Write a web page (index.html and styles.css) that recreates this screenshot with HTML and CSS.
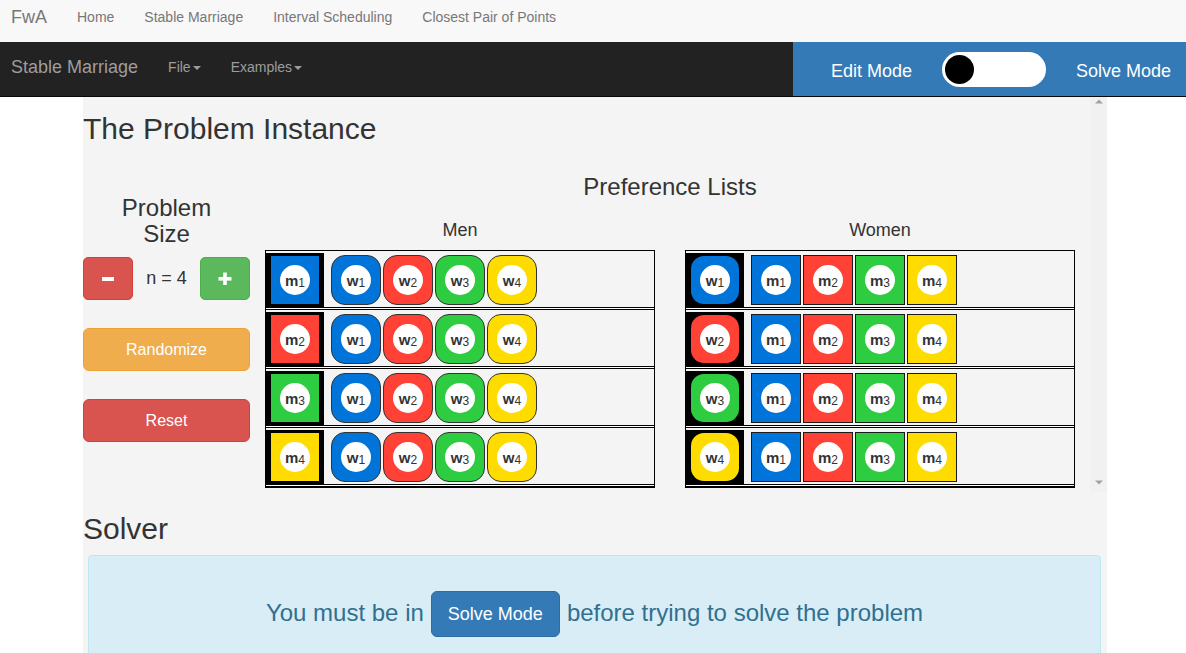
FILE: index.html
```html
<!DOCTYPE html>
<html lang="en">
<head>
<meta charset="utf-8">
<title>Stable Marriage</title>
<link rel="stylesheet" href="styles.css">
</head>
<body>
<nav class="topnav">
  <a class="brand">FwA</a>
  <a class="toplink">Home</a>
  <a class="toplink">Stable Marriage</a>
  <a class="toplink">Interval Scheduling</a>
  <a class="toplink">Closest Pair of Points</a>
</nav>
<nav class="appnav">
  <div class="appnav-left">
    <span class="app-brand">Stable Marriage</span>
    <span class="menu">File<span class="caret"></span></span>
    <span class="menu">Examples<span class="caret"></span></span>
  </div>
  <div class="mode">
    <span class="mode-label">Edit Mode</span>
    <span class="toggle"><span class="knob"></span></span>
    <span class="mode-label">Solve Mode</span>
  </div>
</nav>
<main class="page">
  <div class="scroller">
    <div class="scroll-content">
      <h2 class="title">The Problem Instance</h2>
      <div class="instance">
        <div class="size-col">
          <h3 class="size-title">Problem<br>Size</h3>
          <div class="size-ctrl">
            <button class="btn btn-sq btn-danger"><svg width="14" height="14" viewBox="0 0 14 14"><rect x="1" y="5" width="12" height="4" fill="#fff"/></svg></button>
            <span class="n-label">n = 4</span>
            <button class="btn btn-sq btn-success"><svg width="14" height="14" viewBox="0 0 14 14"><rect x="0.5" y="5" width="13" height="3.6" fill="#fff"/><rect x="5.2" y="0.5" width="3.6" height="12.5" fill="#fff"/></svg></button>
          </div>
          <button class="btn btn-wide btn-warning">Randomize</button>
          <button class="btn btn-wide btn-danger reset">Reset</button>
        </div>
        <div class="prefs">
          <h3 class="prefs-title">Preference Lists</h3>
          <div class="lists">
            <div class="list">
              <div class="list-label">Men</div>
              <div class="ptable">
                <div class="prow">
                  <div class="who"><div class="tile c1"><span class="dot">m<sub>1</sub></span></div></div>
                  <div class="plist">
                    <div class="pref round c1"><span class="dot">w<sub>1</sub></span></div>
                    <div class="pref round c2"><span class="dot">w<sub>2</sub></span></div>
                    <div class="pref round c3"><span class="dot">w<sub>3</sub></span></div>
                    <div class="pref round c4"><span class="dot">w<sub>4</sub></span></div>
                  </div>
                </div>
                <div class="prow">
                  <div class="who"><div class="tile c2"><span class="dot">m<sub>2</sub></span></div></div>
                  <div class="plist">
                    <div class="pref round c1"><span class="dot">w<sub>1</sub></span></div>
                    <div class="pref round c2"><span class="dot">w<sub>2</sub></span></div>
                    <div class="pref round c3"><span class="dot">w<sub>3</sub></span></div>
                    <div class="pref round c4"><span class="dot">w<sub>4</sub></span></div>
                  </div>
                </div>
                <div class="prow">
                  <div class="who"><div class="tile c3"><span class="dot">m<sub>3</sub></span></div></div>
                  <div class="plist">
                    <div class="pref round c1"><span class="dot">w<sub>1</sub></span></div>
                    <div class="pref round c2"><span class="dot">w<sub>2</sub></span></div>
                    <div class="pref round c3"><span class="dot">w<sub>3</sub></span></div>
                    <div class="pref round c4"><span class="dot">w<sub>4</sub></span></div>
                  </div>
                </div>
                <div class="prow">
                  <div class="who"><div class="tile c4"><span class="dot">m<sub>4</sub></span></div></div>
                  <div class="plist">
                    <div class="pref round c1"><span class="dot">w<sub>1</sub></span></div>
                    <div class="pref round c2"><span class="dot">w<sub>2</sub></span></div>
                    <div class="pref round c3"><span class="dot">w<sub>3</sub></span></div>
                    <div class="pref round c4"><span class="dot">w<sub>4</sub></span></div>
                  </div>
                </div>
              </div>
            </div>
            <div class="list">
              <div class="list-label">Women</div>
              <div class="ptable">
                <div class="prow">
                  <div class="who"><div class="tile rtile c1"><span class="dot">w<sub>1</sub></span></div></div>
                  <div class="plist">
                    <div class="pref c1"><span class="dot">m<sub>1</sub></span></div>
                    <div class="pref c2"><span class="dot">m<sub>2</sub></span></div>
                    <div class="pref c3"><span class="dot">m<sub>3</sub></span></div>
                    <div class="pref c4"><span class="dot">m<sub>4</sub></span></div>
                  </div>
                </div>
                <div class="prow">
                  <div class="who"><div class="tile rtile c2"><span class="dot">w<sub>2</sub></span></div></div>
                  <div class="plist">
                    <div class="pref c1"><span class="dot">m<sub>1</sub></span></div>
                    <div class="pref c2"><span class="dot">m<sub>2</sub></span></div>
                    <div class="pref c3"><span class="dot">m<sub>3</sub></span></div>
                    <div class="pref c4"><span class="dot">m<sub>4</sub></span></div>
                  </div>
                </div>
                <div class="prow">
                  <div class="who"><div class="tile rtile c3"><span class="dot">w<sub>3</sub></span></div></div>
                  <div class="plist">
                    <div class="pref c1"><span class="dot">m<sub>1</sub></span></div>
                    <div class="pref c2"><span class="dot">m<sub>2</sub></span></div>
                    <div class="pref c3"><span class="dot">m<sub>3</sub></span></div>
                    <div class="pref c4"><span class="dot">m<sub>4</sub></span></div>
                  </div>
                </div>
                <div class="prow">
                  <div class="who"><div class="tile rtile c4"><span class="dot">w<sub>4</sub></span></div></div>
                  <div class="plist">
                    <div class="pref c1"><span class="dot">m<sub>1</sub></span></div>
                    <div class="pref c2"><span class="dot">m<sub>2</sub></span></div>
                    <div class="pref c3"><span class="dot">m<sub>3</sub></span></div>
                    <div class="pref c4"><span class="dot">m<sub>4</sub></span></div>
                  </div>
                </div>
              </div>
            </div>
          </div>
        </div>
      </div>
    </div>
    <div class="scrollbar">
      <svg class="arrow" width="8" height="5" viewBox="0 0 8 5"><polygon points="0,4.5 8,4.5 4,0.5" fill="#a3a3a3"/></svg>
      <svg class="arrow" width="8" height="5" viewBox="0 0 8 5"><polygon points="0,0.5 8,0.5 4,4.5" fill="#a3a3a3"/></svg>
    </div>
  </div>
  <h2 class="title solver">Solver</h2>
  <div class="alert">
    <span class="alert-text">You must be in</span>
    <button class="btn btn-primary">Solve Mode</button>
    <span class="alert-text">before trying to solve the problem</span>
  </div>
</main>
</body>
</html>
```

FILE: styles.css
```css
html, body {
  margin: 0;
  padding: 0;
  height: 653px;
  overflow: hidden;
  background: #fff;
  font-family: "Liberation Sans", Arial, sans-serif;
  color: #333;
}

.topnav {
  display: flex;
  height: 42px;
  box-sizing: border-box;
  padding-top: 7px;
  background: #f8f8f8;
  line-height: 20px;
}
.brand {
  font-size: 18px;
  color: #777;
  padding: 0 15px 0 11px;
}
.toplink {
  font-size: 14px;
  color: #777;
  padding: 0 15px;
}

.appnav {
  display: flex;
  height: 55px;
  box-sizing: border-box;
  background: #222;
  border-bottom: 1px solid #080808;
}
.appnav-left {
  display: flex;
  align-items: flex-start;
  padding-top: 15px;
  line-height: 20px;
}
.app-brand {
  font-size: 18px;
  color: #9d9d9d;
  padding: 0 15px 0 11px;
}
.menu {
  font-size: 14px;
  color: #9d9d9d;
  padding: 0 15px;
}
.caret {
  display: inline-block;
  width: 0;
  height: 0;
  margin-left: 2px;
  vertical-align: middle;
  border-top: 4px solid #9d9d9d;
  border-left: 4px solid transparent;
  border-right: 4px solid transparent;
}

.mode {
  margin-left: auto;
  width: 393px;
  box-sizing: border-box;
  background: #337ab7;
  display: flex;
  align-items: center;
  padding-left: 38px;
  gap: 30px;
}
.mode-label {
  color: #fff;
  font-size: 18px;
  margin-top: 4px;
}
.toggle {
  width: 104px;
  height: 35px;
  border-radius: 18px;
  background: #fff;
  display: flex;
  align-items: center;
  padding-left: 3px;
  box-sizing: border-box;
}
.knob {
  width: 29px;
  height: 29px;
  border-radius: 50%;
  background: #000;
}

.page {
  width: 1024px;
  margin-left: 83px;
  background: #f4f4f4;
  height: 556px;
}
.scroller {
  display: flex;
  height: 395px;
}
.scroll-content {
  flex: 1;
  overflow: hidden;
}
.scrollbar {
  width: 17px;
  background: #f1f1f1;
  display: flex;
  flex-direction: column;
  align-items: center;
  justify-content: space-between;
  padding: 2px 0 7px;
  box-sizing: border-box;
}
.arrow {
  display: block;
}

.title {
  margin: 15px 0 0;
  font-size: 30px;
  line-height: 33px;
  font-weight: normal;
  color: #333;
}
.title.solver {
  margin: 20px 0 10px;
}

.instance {
  display: flex;
  gap: 15px;
  margin-top: 29px;
}
.size-col {
  width: 167px;
  padding-top: 21px;
  display: flex;
  flex-direction: column;
}
.size-title {
  margin: 0;
  font-size: 24px;
  line-height: 26px;
  font-weight: normal;
  text-align: center;
}
.size-ctrl {
  margin-top: 10px;
  display: flex;
  align-items: center;
  justify-content: space-between;
}
.n-label {
  font-size: 18px;
}

.btn {
  font-family: "Liberation Sans", Arial, sans-serif;
  color: #fff;
  border: 1px solid transparent;
  border-radius: 5px;
  cursor: pointer;
  padding: 0;
  margin: 0;
}
.btn-sq {
  width: 50px;
  height: 43px;
  display: flex;
  align-items: center;
  justify-content: center;
}
.btn-wide {
  width: 167px;
  height: 43px;
  font-size: 16px;
  margin-top: 28px;
  border-radius: 6px;
}
.btn-danger {
  background: #d9534f;
  border-color: #d43f3a;
}
.btn-success {
  background: #5cb85c;
  border-color: #4cae4c;
}
.btn-warning {
  background: #f0ad4e;
  border-color: #eea236;
}
.btn-primary {
  background: #337ab7;
  border-color: #2e6da4;
  font-size: 18px;
  line-height: 24px;
  padding: 10px 16px;
  border-radius: 6px;
}

.prefs {
  width: 810px;
}
.prefs-title {
  margin: 0;
  font-size: 24px;
  line-height: 26px;
  font-weight: normal;
  text-align: center;
}
.lists {
  display: flex;
  gap: 30px;
}
.list {
  width: 390px;
}
.list-label {
  margin-top: 20px;
  font-size: 18px;
  line-height: 20px;
  text-align: center;
}

.ptable {
  margin-top: 10px;
  width: 390px;
  box-sizing: border-box;
  border: 1px solid #000;
  border-bottom-width: 2px;
  background: #fff;
  display: flex;
  flex-direction: column;
  gap: 1px;
  padding-bottom: 1px;
}
.prow {
  background: #f4f4f4;
  border-top: 1px solid #000;
  border-bottom: 1px solid #000;
  height: 54px;
  padding-top: 2px;
  display: flex;
  align-items: center;
}
.prow:first-child {
  border-top: none;
}
.who {
  background: #000;
  padding: 3px 5px;
}
.tile {
  width: 48px;
  height: 48px;
  display: flex;
  align-items: center;
  justify-content: center;
}
.rtile {
  border-radius: 13px;
}
.plist {
  display: flex;
  gap: 2px;
  margin-left: 7px;
}
.pref {
  width: 50px;
  height: 50px;
  box-sizing: border-box;
  border: 1px solid #1a1a1a;
  display: flex;
  align-items: center;
  justify-content: center;
}
.pref.round {
  border-color: #333;
  border-radius: 14px;
}
.dot {
  width: 30px;
  height: 30px;
  border-radius: 50%;
  background: #fff;
  display: flex;
  align-items: center;
  justify-content: center;
  font-size: 15px;
  font-weight: bold;
  color: #333;
  line-height: 1;
}
.dot sub {
  font-size: 12px;
  font-weight: normal;
  line-height: 0;
  position: relative;
  top: 3px;
  vertical-align: baseline;
}
.c1 { background: #0074d9; }
.c2 { background: #ff4136; }
.c3 { background: #2ecc40; }
.c4 { background: #ffdc00; }

.alert {
  margin: 0 6px 0 5px;
  padding: 35px 15px 40px;
  background: #d9edf7;
  border: 1px solid #bce8f1;
  border-radius: 4px;
  color: #31708f;
  font-size: 24px;
  display: flex;
  justify-content: center;
  align-items: center;
  gap: 7px;
}
.alert-text {
  margin-top: -3px;
}
```
